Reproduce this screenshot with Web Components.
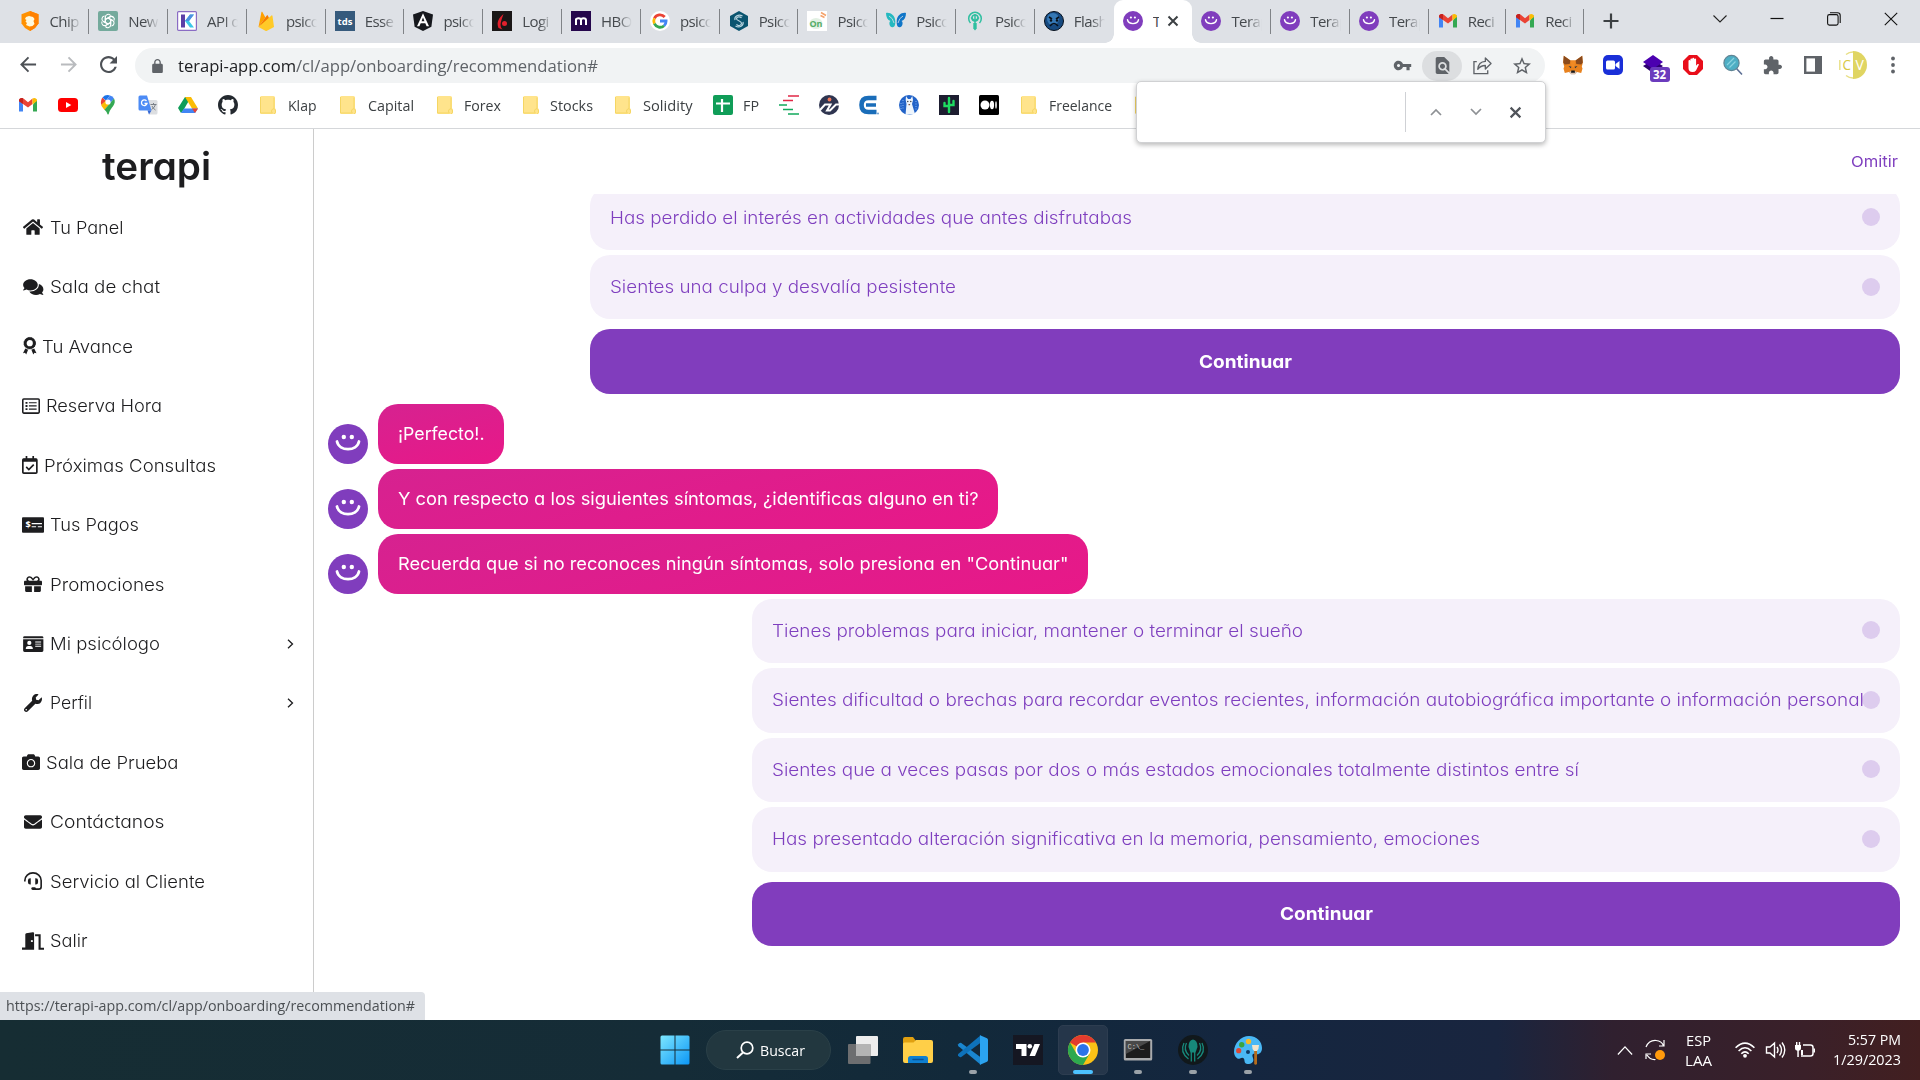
<!DOCTYPE html>
<html lang="es">
<head>
<meta charset="utf-8">
<title>Terapi</title>
<style>
html,body{margin:0;height:100%;overflow:hidden;background:#fff}
body{font-family:"Open Sans","Noto Sans",sans-serif}
</style>
</head>
<body>
<desktop-screen></desktop-screen>
<script>
const smile = '<circle cx="20" cy="20" r="20" fill="#803dbd"/><circle cx="15.800" cy="13" r="2.200" fill="#fff"/><circle cx="23.800" cy="13" r="2.200" fill="#fff"/><path d="M9 17.500c2.200 10.200 19.800 10.200 22 0" fill="none" stroke="#fff" stroke-width="2.800" stroke-linecap="round"/>';
const gmail = '<path d="M1 4v12.500h4V9.500z" fill="#4285f4"/><path d="M19 4v12.500h-4V9.500z" fill="#34a853"/><path d="M1 5.500C1 3 4 2.200 5.500 3.600L10 7.200l4.500-3.600V9L10 12.600 5 8.900 1 6z" fill="#ea4335"/><path d="M14.500 3.600C16 2.200 19 3 19 5.500V6l-4.500 3.400z" fill="#fbbc04"/><path d="M1 5.500C1 3.500 3 2.500 5 3.300v5.800L1 6.200z" fill="#c5221f"/>';
const ICONS = {
 smile:['0 0 40 40',smile], gmail:['0 0 20 20',gmail],
 brave:['0 0 20 20','<path d="M10 0l8.500 3.200v9.300L15 17l-5 3-5-3-3.500-4.500V3.200z" fill="#ff9100"/><path d="M10 0l8.500 3.200v9.300L15 17l-5 3z" fill="#ff8000"/><path d="M6 6l3-1 4 1 1.500 2-1 2 1 3-2 2-3 .5L6 14l1-2-1.500-1.500 1-1.500L5 8z" fill="#fff8dc"/>'],
 gpt:['0 0 20 20','<rect width="20" height="20" rx="2" fill="#74aa9c"/><g fill="none" stroke="#fff" stroke-width="1.100"><path id="p" d="M7.300 11.500V6.200a2.900 2.900 0 0 1 5.300-1.600M7.300 8.500l4.500-2.600a2.900 2.900 0 0 1 3.300.2"/><path d="M7.300 11.500V6.200a2.900 2.900 0 0 1 5.300-1.600M7.300 8.500l4.500-2.600" transform="rotate(60 10 10)"/><path d="M7.300 11.500V6.200a2.900 2.900 0 0 1 5.300-1.600M7.300 8.500l4.500-2.600" transform="rotate(120 10 10)"/><path d="M7.300 11.500V6.200a2.900 2.900 0 0 1 5.300-1.600M7.300 8.500l4.500-2.600" transform="rotate(180 10 10)"/><path d="M7.300 11.500V6.200a2.900 2.900 0 0 1 5.300-1.600M7.300 8.500l4.500-2.600" transform="rotate(240 10 10)"/><path d="M7.300 11.500V6.200a2.900 2.900 0 0 1 5.300-1.600M7.300 8.500l4.500-2.600" transform="rotate(300 10 10)"/></g>'],
 kibo:['0 0 20 20','<rect x=".6" y=".6" width="18.800" height="18.800" rx="1" fill="#fff" stroke="#8a6cc4" stroke-width="1.200"/><path d="M4 3.500h4v13H4z" fill="#5b3fa6"/><path d="M8 10l5-6.500h4L12 10l5 6.500h-4z" fill="#3cc8e8"/><path d="M8 10l5-6.500h4L12 10z" fill="#4f8fe0"/>'],
 firebase:['0 0 20 20','<path d="M2.500 16L5.400 1.200c.1-.6.800-.6 1-.2l3 5.400z" fill="#ffa000"/><path d="M2.500 16l8.300-11.500c.3-.5.800-.5 1 0L14 9z" fill="#f57c00"/><path d="M2.500 16L15.500 4.500c.4-.3.900-.1 1 .4L18 16l-7 3.700c-.5.300-1.100.3-1.600 0z" fill="#ffca28"/>'],
 tds:['0 0 20 20','<rect width="20" height="20" fill="#365a7c"/><text x="10" y="13.500" font-size="9.500" font-weight="700" text-anchor="middle" fill="#fff" font-family="Open Sans">tds</text>'],
 angular:['0 0 20 20','<path d="M10 0l10 3.400-1.600 12.400L10 20l-8.400-4.200L0 3.400z" fill="#16181d"/><path fill-rule="evenodd" d="M10 2.300l6 12.900h-2.400l-1.300-3H7.700l-1.300 3H4zm0 4.200L8.500 10.200h3z" fill="#fff"/>'],
 hand:['0 0 20 20','<rect width="20" height="20" fill="#1a1717"/><path d="M11.500 3C7 7 4 11 6.500 17l4 1.500c-4-4-1-9 1-15.500z" fill="#e3202d"/><circle cx="12.500" cy="12.500" r="2.500" fill="#e3202d"/>'],
 mhbo:['0 0 20 20','<rect width="20" height="20" fill="#25064c"/><path d="M5 14V7.500M5 9c.3-2.500 5-2.500 5 .3V14m0-4.700c0-2.800 5-2.800 5 0V14" fill="none" stroke="#fff" stroke-width="2"/>'],
 google:['0 0 20 20','<circle cx="10" cy="10" r="10" fill="#fff"/><g fill="none" stroke-width="2.800"><path d="M14.700 6A6.200 6.200 0 0 0 4.400 7.300" stroke="#ea4335"/><path d="M4.400 7.300a6.200 6.200 0 0 0 0 5.400" stroke="#fbbc05"/><path d="M4.400 12.700a6.200 6.200 0 0 0 9.700 2" stroke="#34a853"/><path d="M14.100 14.700a6.200 6.200 0 0 0 2-4.700H10" stroke="#4285f4"/></g>'],
 hex:['0 0 20 20','<path d="M10 0l9 5v10l-9 5-9-5V5z" fill="#0b5570"/><g fill="none" stroke="#b9d5e0" stroke-width="1.200"><path d="M12.500 7c-1.500-2-5-1.200-5 .8s5 2 5 4.500-3.500 3-5 1"/><path d="M13.500 5C9.500 2.500 5 5.500 6 9M6.500 15c4 2.500 8.500-.5 7.500-4"/></g>'],
 on:['0 0 20 20','<rect width="20" height="20" fill="#fff"/><ellipse cx="9" cy="12.500" rx="6.500" ry="5.500" fill="#e2f0e3"/><text x="9" y="15.500" font-size="9" font-weight="700" text-anchor="middle" fill="#54ad68" font-family="Open Sans">On</text><path d="M13.500 4.500l4 2M14 1.500l5 3" stroke="#f5a26b" stroke-width="1.500"/>'],
 butterfly:['0 0 20 20','<path d="M9.300 10C9 4 4 1 0 2c0 4 1.500 7 4.500 8-2 1-1 5.500 1 6 3 1 4-2 3.800-6z" fill="#25b9c0"/><path d="M10.700 10C11 4 16 1 20 2c0 4-1.500 7-4.500 8 2 1 1 5.500-1 6-3 1-4-2-3.800-6z" fill="#1076c8"/><path d="M3 5q4 2 5 7M17 5q-4 2-5 7" stroke="#dee1e6" fill="none" stroke-width=".8"/>'],
 tree:['0 0 20 20','<g fill="none" stroke="#2fbfa0" stroke-width="1.500"><path d="M5.500 12a6.300 6.300 0 1 1 9 0"/><path d="M10 3v9M10 10L6 6.500M10 10l4-3.500"/><circle cx="10" cy="7" r="3"/></g><path d="M8.300 12h3.400v5.500L10 19.500 8.300 17.500z" fill="#2fbfa0"/>'],
 flash:['0 0 20 20','<circle cx="10" cy="10" r="9.500" fill="#174a80" stroke="#07101c"/><circle cx="9" cy="8" r="6" fill="#3578b5"/><path d="M5 6l3 2M15 6l-3 2M6 15q4-5 8 0" stroke="#07101c" stroke-width="1.600" fill="none"/><circle cx="7" cy="9.500" r="1.200" fill="#07101c"/><circle cx="13" cy="9.500" r="1.200" fill="#07101c"/>'],
 close:['0 0 12 12','<path d="M1.500 1.500l9 9M10.500 1.500l-9 9" stroke="currentColor" stroke-width="2"/>'],
 plus:['0 0 16 16','<path d="M8 .5v15M.5 8h15" stroke="#3c4043" stroke-width="2.200"/>'],
 wchev:['0 0 14 10','<path d="M.5 1.500L7 8l6.500-6.500" fill="none" stroke="#222" stroke-width="1.100"/>'],
 wmin:['0 0 14 14','<path d="M.5 6.500h13" stroke="#111" stroke-width="1.200"/>'],
 wrest:['0 0 14 14','<rect x=".6" y="2.600" width="10.500" height="10.500" rx="1.800" fill="none" stroke="#111" stroke-width="1.100"/><path d="M3 .8h7.500a2.700 2.700 0 0 1 2.700 2.700V11" fill="none" stroke="#111" stroke-width="1.100"/>'],
 wclose:['0 0 14 14','<path d="M.8.8l12.400 12.400M13.200.8L.8 13.200" stroke="#111" stroke-width="1.100"/>'],
 back:['0 0 18 18','<path d="M17 9H2M9 1.500L1.500 9 9 16.500" fill="none" stroke="currentColor" stroke-width="2"/>'],
 fwd:['0 0 18 18','<path d="M1 9h15M9 1.500L16.500 9 9 16.500" fill="none" stroke="currentColor" stroke-width="2"/>'],
 reload:['4 4 16 16','<path fill="currentColor" d="M17.650 6.350C16.200 4.900 14.210 4 12 4c-4.420 0-7.990 3.580-7.990 8s3.570 8 7.990 8c3.730 0 6.840-2.550 7.730-6h-2.080c-.82 2.330-3.040 4-5.650 4-3.310 0-6-2.690-6-6s2.690-6 6-6c1.660 0 3.140.69 4.220 1.780L13 11h7V4l-2.350 2.350z"/>'],
 lock:['4 1 16 21','<path fill="#5f6368" d="M18 8h-1V6c0-2.760-2.240-5-5-5S7 3.240 7 6v2H6c-1.100 0-2 .9-2 2v10c0 1.100.9 2 2 2h12c1.100 0 2-.9 2-2V10c0-1.100-.9-2-2-2zm-9 0V6c0-1.660 1.340-3 3-3s3 1.340 3 3v2H9z"/>'],
 key:['0 0 24 24','<path fill="#5f6368" d="M12.650 10C11.830 7.670 9.610 6 7 6c-3.310 0-6 2.690-6 6s2.690 6 6 6c2.610 0 4.830-1.670 5.650-4H17v4h4v-4h2v-4H12.650zM7 14c-1.100 0-2-.9-2-2s.9-2 2-2 2 .9 2 2-.9 2-2 2z"/>'],
 find:['2 2 20 20','<path fill="#5f6368" d="M20 19.590V8l-6-6H6c-1.100 0-1.990.9-1.990 2L4 20c0 1.100.89 2 1.990 2H18c.45 0 .85-.15 1.190-.4l-4.430-4.430c-.8.52-1.740.83-2.760.83-2.760 0-5-2.240-5-5s2.240-5 5-5 5 2.240 5 5c0 1.020-.31 1.960-.83 2.750L20 19.590zM9 13c0 1.660 1.340 3 3 3s3-1.340 3-3-1.340-3-3-3-3 1.340-3 3z"/>'],
 share:['0 0 20 20','<path d="M4 6H1v12.500h14.500V15" fill="none" stroke="#5f6368" stroke-width="1.400"/><path d="M5 14c.5-5.500 3-8 8-8.300V2l6 5.800-6 5.800V10c-3.500 0-6 1.200-8 4z" fill="none" stroke="#5f6368" stroke-width="1.400" stroke-linejoin="round"/>'],
 star:['2 2 20 20','<path fill="#5f6368" d="M22 9.240l-7.190-.62L12 2 9.190 8.630 2 9.240l5.460 4.730L5.820 21 12 17.270 18.180 21l-1.630-7.030L22 9.240zM12 15.400l-3.760 2.270 1-4.280-3.320-2.880 4.380-.38L12 6.100l1.710 4.040 4.380.38-3.320 2.880 1 4.280L12 15.400z"/>'],
 fox:['0 0 20 20','<path d="M.8.8L7.500 5.500h5L19.200.8l.6 7-1 4 .7 1.800-1.300 4.400-4.200-1-2 1.800H8L6 17l-4.200 1-1.300-4.400.7-1.800-1-4z" fill="#e8821e"/><path d="M.8.8l6.700 4.700-.8 3.500-5 .5-1.500-2zM19.200.8l-6.700 4.700.8 3.500 5 .5 1.500-2z" fill="#8a4a1c"/><path d="M7.500 5.500h5L11.500 12h-3z" fill="#f08a24"/><path d="M5.500 11l3 .8-.8 1.500zM14.500 11l-3 .8.800 1.500z" fill="#233447"/><path d="M6 17l2.500-1h3l2.500 1-2 2.500H8z" fill="#d7c1b3"/><path d="M8.300 15.500h3.400l.3 2.200H8z" fill="#161616"/>'],
 zoomx:['0 0 20 20','<rect width="20" height="20" rx="5" fill="#1a2fd8"/><rect x="3" y="5.500" width="9" height="9" rx="1.500" fill="#fff"/><path d="M12.500 9l4-3v8l-4-3z" fill="#fff"/>'],
 layers:['0 0 20 20','<path d="M0 11l10-6 10 6-10 7z" fill="#2d0070"/><path d="M10 0l10 7-10 7L0 7z" fill="#4b00b0"/>'],
 abp:['0 0 20 20','<path d="M6 0h8l6 6v8l-6 6H6l-6-6V6z" fill="#e90e1a"/><path d="M5.500 10V6a.9.9 0 0 1 1.900 0v3V4.500a.9.9 0 0 1 1.900 0V8.500V3.700a.9.9 0 0 1 1.900 0V8.500V4.500a.9.9 0 0 1 1.900 0v6.300l1.300-1.500c.8-.8 1.800 0 1.300.8L13 15.500Q11.800 17 9.500 17 5.500 17 5.500 13z" fill="#fff"/>'],
 lens:['0 0 20 20','<path d="M13 13l6 6.500" stroke="#5d6f94" stroke-width="1.600"/><circle cx="8.500" cy="8" r="7.600" fill="#4eaec4" stroke="#5f8595" stroke-width="1.200"/><path d="M4 10l7-7M6.500 12.500l6-6" stroke="#8ad3e0" stroke-width="1.200"/>'],
 ext:['1 1 22 22','<path fill="#5f6368" d="M20.500 11H19V7c0-1.100-.9-2-2-2h-4V3.500C13 2.120 11.880 1 10.500 1S8 2.120 8 3.500V5H4c-1.100 0-1.990.9-1.990 2v3.800H3.500c1.490 0 2.700 1.210 2.700 2.700s-1.210 2.700-2.700 2.700H2V20c0 1.100.9 2 2 2h3.800v-1.500c0-1.490 1.210-2.700 2.700-2.700 1.490 0 2.700 1.210 2.700 2.700V22H17c1.100 0 2-.9 2-2v-4h1.500c1.380 0 2.500-1.120 2.500-2.500S21.880 11 20.500 11z"/>'],
 panel:['0 0 18 18','<rect x="1.200" y="1.200" width="15.600" height="15.600" fill="#fff" stroke="#5f6368" stroke-width="2.400"/><rect x="11" y="1" width="6" height="16" fill="#5f6368"/>'],
 cv:['0 0 28 28','<path d="M14 0a14 14 0 0 1 0 28z" fill="#e0d562"/><path d="M14 1Q10 1 7 3.500M14 27q-4 0-7-2.500M.8 9v10" fill="none" stroke="#e8df85" stroke-width="1.400"/><text x="3.500" y="19" font-size="14" textLength="8.500" lengthAdjust="spacingAndGlyphs" fill="#d8c840" font-family="Open Sans">C</text><text x="16.500" y="19" font-size="14" fill="#fff" font-family="Open Sans">V</text>'],
 dots:['0 0 4 18','<circle cx="2" cy="2.500" r="1.900" fill="#5f6368"/><circle cx="2" cy="9" r="1.900" fill="#5f6368"/><circle cx="2" cy="15.500" r="1.900" fill="#5f6368"/>'],
 youtube:['0 0 20 20','<rect y="3" width="20" height="14" rx="3.500" fill="#f00"/><path d="M8 7l5.300 3L8 13z" fill="#fff"/>'],
 maps:['0 0 20 20','<path d="M4.500 2.500L8 6 3.200 10C2.500 7 3 4.500 4.500 2.500z" fill="#ea4335"/><path d="M4.500 2.500A7 7 0 0 1 12 .5L8 5.500z" fill="#1a73e8"/><path d="M12 .5a7 7 0 0 1 4 3L12 8.500 8 5.500z" fill="#4285f4"/><path d="M3.200 10L8 5.500l4 3-5.500 6.500C5 13 3.700 11.500 3.200 10z" fill="#fbbc04"/><path d="M16 3.500c3 6-3.500 9-5 14.500-.5 2-1.500 2-2 0-.3-1.300-1-2-2.500-3.300z" fill="#34a853"/><circle cx="10" cy="7" r="2.600" fill="#fff"/>'],
 translate:['0 0 20 20','<path d="M7 5h11a1.500 1.500 0 0 1 1.500 1.500V18a1.500 1.500 0 0 1-1.500 1.500h-7z" fill="#dcdee1"/><path d="M2 .5h7l4.500 15H2A1.500 1.500 0 0 1 .5 14V2A1.500 1.500 0 0 1 2 .5z" fill="#4c8bf5"/><path d="M8.500 6A2.800 2.800 0 1 0 9 8.500H6.500" fill="none" stroke="#fff" stroke-width="1.300"/><path d="M12.500 9.500h6M15.500 8v1.500M17.500 9.500q-1 3.500-4 5M14 11q1 2.500 3.500 4" fill="none" stroke="#7a8087"/><path d="M9.500 15.500h4l-2.500 4z" fill="#3367d6"/>'],
 drive:['0 0 20 20','<path d="M7 2h6l-7.500 13L3 18 0 13z" fill="#0f9d58"/><path d="M7 2h6l7 11.500h-6z" fill="#fbbc04"/><path d="M6 13.500h14L17 18H3z" fill="#4285f4"/><path d="M14 13.500h6L17 18z" fill="#ea4335"/>'],
 github:['0 0 16 16','<path fill="#24292f" d="M8 0C3.580 0 0 3.580 0 8c0 3.540 2.290 6.530 5.470 7.590.4.07.55-.17.55-.38 0-.19-.01-.82-.01-1.490-2.010.37-2.530-.49-2.690-.94-.09-.23-.48-.94-.82-1.130-.28-.15-.68-.52-.01-.53.63-.01 1.080.58 1.230.82.72 1.210 1.870.87 2.330.66.07-.52.28-.87.51-1.070-1.780-.2-3.640-.89-3.640-3.950 0-.87.31-1.590.82-2.150-.08-.2-.36-1.020.08-2.120 0 0 .67-.21 2.200.82.64-.18 1.320-.27 2-.27s1.360.09 2 .27c1.530-1.040 2.200-.82 2.200-.82.44 1.100.16 1.920.08 2.120.51.56.82 1.270.82 2.150 0 3.070-1.870 3.750-3.650 3.950.29.25.54.73.54 1.480 0 1.070-.01 1.930-.01 2.200 0 .21.15.46.55.38A8.010 8.010 0 0 0 16 8c0-4.420-3.580-8-8-8z"/>'],
 folder:['0 0 16 20','<path d="M1.500 1h12A1.500 1.500 0 0 1 15 2.500V13l1 2v2.500q0 1.500-1.500 1.500h-13A1.500 1.500 0 0 1 0 17.500v-15A1.500 1.500 0 0 1 1.500 1z" fill="#ffe48c"/><path d="M.5 2v16h12q-1-.5-1-2 0-2 2.500-2.300V2.500M14 13.500q2 1 1.500 4l-1.500 1.300" fill="none" stroke="#f5d663"/>'],
 sheet:['0 0 20 20','<rect width="20" height="20" rx="2" fill="#109d58"/><path d="M9 4v13M3 8.500h14" stroke="#fff" stroke-width="2.200"/>'],
 redgreen:['0 0 20 20','<g stroke-width="1.500"><path d="M9 1h11M4 5.500h10" stroke="#e12745"/><path d="M0 10h8M4 14.500h10M9 19h11" stroke="#12a95c"/></g>'],
 info:['0 0 20 20','<circle cx="10" cy="10" r="10" fill="#2f3550"/><path d="M1 15l5-5.500h5.500L8 15.500h3l6-6H20" stroke="#fff" stroke-width="2" fill="none"/><circle cx="10.500" cy="4.500" r="1.900" fill="#f0795b"/>'],
 bige:['0 0 20 20','<path d="M17.500 3H9.500C4.500 3 2.500 6 2.500 10s2 7 7 7h8" fill="none" stroke="#1a6db9" stroke-width="4.600"/><path d="M7 10h10" stroke="#1a6db9" stroke-width="3.500"/><circle cx="19" cy="18.500" r="1" fill="#6d9fd0"/>'],
 llama:['0 0 20 20','<circle cx="10" cy="10" r="10" fill="#2263c8"/><path d="M2 8v7M4 5v10M17 6v9" stroke="#85b5f2" stroke-dasharray="1 1.500"/><path d="M6.500 20L7.500 9l-.8-4 .3-4L9 4h2.500l1.800-3L14 5l-1 4 3 10z" fill="#eef5fc"/><circle cx="8.800" cy="6.500" r=".7" fill="#333"/><circle cx="11.800" cy="6.500" r=".7" fill="#333"/><path d="M9.500 9h1.600v1.200H9.500z" fill="#7a5548"/>'],
 cactus:['0 0 20 20','<rect width="20" height="20" fill="#1d1d30"/><path d="M10 3v14M5.500 8v3h4M14.500 6v4H10" stroke="#1edb61" stroke-width="2.400" fill="none" stroke-linecap="round"/>'],
 medium:['0 0 20 20','<rect width="20" height="20" rx="1.500" fill="#000"/><circle cx="6" cy="10" r="4.500" fill="#fff"/><ellipse cx="13" cy="10" rx="2.100" ry="4.200" fill="#fff"/><ellipse cx="17" cy="10" rx=".8" ry="3.800" fill="#fff"/>'],
 up:['0 0 12 8','<path d="M1 7l5-5 5 5" fill="none" stroke="#8d9094" stroke-width="1.700"/>'],
 down:['0 0 12 8','<path d="M1 1l5 5 5-5" fill="none" stroke="#8d9094" stroke-width="1.700"/>'],
 home:['0 0 576 512','<path d="M280.370 148.260L96 300.110V464a16 16 0 0 0 16 16l112.060-.29a16 16 0 0 0 15.920-16V368a16 16 0 0 1 16-16h64a16 16 0 0 1 16 16v95.640a16 16 0 0 0 16 16.050L464 480a16 16 0 0 0 16-16V300L295.670 148.260a12.190 12.190 0 0 0-15.300 0zM571.600 251.470L488 182.560V44.050a12 12 0 0 0-12-12h-56a12 12 0 0 0-12 12v72.610L318.470 43a48 48 0 0 0-61 0L4.340 251.470a12 12 0 0 0-1.600 16.900l25.500 31A12 12 0 0 0 45.150 301l235.220-193.740a12.190 12.190 0 0 1 15.300 0L530.900 301a12 12 0 0 0 16.900-1.600l25.500-31a12 12 0 0 0-1.700-16.930z"/>'],
 comments:['0 0 576 512','<path d="M416 192c0-88.400-93.100-160-208-160S0 103.600 0 192c0 34.300 14.100 65.900 38 92-13.400 30.200-35.500 54.200-35.800 54.500-2.200 2.300-2.800 5.700-1.500 8.700S4.800 352 8 352c36.600 0 66.900-12.300 88.700-25 32.200 15.700 70.300 25 111.300 25 114.900 0 208-71.600 208-160zm122 220c23.900-26 38-57.700 38-92 0-66.900-53.500-124.200-129.300-148.100.9 6.600 1.300 13.300 1.300 20.100 0 105.900-107.700 192-240 192-10.800 0-21.300-.8-31.700-1.900C207.800 439.600 281.800 480 368 480c41 0 79.100-9.200 111.300-25 21.800 12.700 52.100 25 88.700 25 3.200 0 6.100-1.900 7.300-4.800 1.300-2.900.7-6.300-1.500-8.700-.3-.3-22.400-24.200-35.800-54.500z"/>'],
 award:['0 0 384 512','<circle cx="192" cy="176" r="128" fill="none" stroke="currentColor" stroke-width="80" /><circle cx="192" cy="176" r="164" fill="none" stroke="currentColor" stroke-width="24" stroke-dasharray="60 26"/><path d="M65 330l80 35-54 135-34-52-57 12zM319 330l-80 35 54 135 34-52 57 12z"/>'],
 list:['0 0 512 512','<rect x="22" y="54" width="468" height="404" rx="28" fill="none" stroke="currentColor" stroke-width="44"/><path d="M100 140h56v50h-56zM100 231h56v50h-56zM100 322h56v50h-56zM196 147h220v34H196zM196 238h220v34H196zM196 329h220v34H196z"/>'],
 calendar:['0 0 448 512','<rect x="24" y="88" width="400" height="400" rx="28" fill="none" stroke="currentColor" stroke-width="48"/><path d="M24 80h400v80H24zM104 0h48v100h-48zM296 0h48v100h-48z"/><path d="M120 310l75 75 140-140" fill="none" stroke="currentColor" stroke-width="46"/>'],
 pay:['0 0 640 512','<rect y="32" width="640" height="448" rx="28"/><path d="M280 200h300v34H280zM280 290h130v30H280zM460 290h120v30H460z" fill="#fff"/><text x="100" y="355" font-size="270" font-weight="700" fill="#fff" font-family="Open Sans">$</text>'],
 gift:['0 0 512 512','<path d="M32 448c0 17.700 14.300 32 32 32h160V320H32v128zm256 32h160c17.700 0 32-14.300 32-32V320H288v160zM480 160h-42.100c6.200-12.100 10.100-25.500 10.100-40 0-48.500-39.500-88-88-88-41.600 0-68.500 21.300-103 68.300-34.500-47-61.400-68.300-103-68.300-48.500 0-88 39.500-88 88 0 14.500 3.800 27.900 10.100 40H32c-17.700 0-32 14.300-32 32v80c0 8.800 7.200 16 16 16h480c8.800 0 16-7.200 16-16v-80c0-17.700-14.300-32-32-32zm-326.100 0c-22.100 0-40-17.900-40-40s17.900-40 40-40c19.900 0 34.600 3.300 86.100 60l17 20H153.900zm206.100 0H257l17-20c51.400-56.700 66-60 86-60 22.100 0 40 17.900 40 40s-17.900 40-40 40z"/>'],
 idcard:['0 0 576 512','<path d="M0 72q0-40 40-40h496q40 0 40 40v20H0zM0 124h576v316q0 40-40 40H40q-40 0-40-40z"/><circle cx="176" cy="224" r="60" fill="#fff"/><path d="M75 400q0-90 75-90h52q75 0 75 90zM344 184h168v26H344zM344 246h168v26H344zM344 308h168v26H344z" fill="#fff"/>'],
 wrench:['0 0 512 512','<path d="M507.730 109.100c-2.240-9.030-13.540-12.090-20.120-5.510l-74.360 74.360-67.880-11.310-11.310-67.880 74.360-74.360c6.620-6.620 3.430-17.900-5.660-20.160-47.380-11.740-99.550.91-136.580 37.930-39.640 39.640-50.550 97.100-34.050 147.200L18.740 402.760c-24.990 24.990-24.990 65.510 0 90.500 24.990 24.990 65.510 24.990 90.500 0l213.210-213.210c50.120 16.710 107.470 5.680 147.370-34.220 37.070-37.070 49.700-89.320 37.910-136.730zM64 472c-13.250 0-24-10.750-24-24 0-13.260 10.750-24 24-24s24 10.740 24 24c0 13.250-10.750 24-24 24z"/>'],
 camera:['0 0 512 512','<path d="M512 144v288c0 26.500-21.500 48-48 48H48c-26.500 0-48-21.500-48-48V144c0-26.500 21.500-48 48-48h88l12.300-32.900c7-18.700 24.900-31.100 44.900-31.100h125.500c20 0 37.900 12.400 44.900 31.100L376 96h88c26.500 0 48 21.500 48 48zM376 288c0-66.200-53.800-120-120-120s-120 53.800-120 120 53.800 120 120 120 120-53.800 120-120zm-32 0c0 48.500-39.500 88-88 88s-88-39.500-88-88 39.500-88 88-88 88 39.500 88 88z"/>'],
 envelope:['0 0 512 512','<path d="M502.300 190.800c3.900-3.100 9.700-.2 9.700 4.700V400c0 26.500-21.500 48-48 48H48c-26.500 0-48-21.500-48-48V195.600c0-5 5.700-7.800 9.700-4.700 22.400 17.400 52.100 39.500 154.100 113.600 21.100 15.400 56.700 47.800 92.200 47.600 35.700.3 72-32.800 92.300-47.600 102-74.100 131.600-96.300 154-113.700zM256 320c23.200.4 56.600-29.200 73.400-41.400 132.700-96.300 142.800-104.700 173.400-128.700 5.800-4.500 9.200-11.500 9.200-18.900v-19c0-26.500-21.500-48-48-48H48c-26.500 0-48 21.500-48 48v19c0 7.400 3.400 14.300 9.200 18.900 30.600 23.900 40.700 32.400 173.400 128.700 16.800 12.200 50.200 41.800 73.400 41.400z"/>'],
 headset:['0 0 512 512','<path d="M24 270V240a232 216 0 0 1 464 0v180q0 68-68 68H300" fill="none" stroke="currentColor" stroke-width="46"/><path d="M192 176h-16q-64 0-64 64v48q0 64 64 64h16zM320 176h16q64 0 64 64v48q0 64-64 64h-16z"/><rect x="208" y="432" width="130" height="78" rx="38"/>'],
 door:['0 0 640 512','<path fill-rule="evenodd" d="M0 448h96V70q0-28 28-36L310 1q42-8 42 32v479H0zM288 224a32 32 0 1 0 .1 0z"/><path d="M380 88h132v392h128" fill="none" stroke="currentColor" stroke-width="62"/>'],
 chev:['0 0 7 10','<path d="M1 .7L5.500 5 1 9.300" fill="none" stroke="currentColor" stroke-width="1.300"/>'],
 win:['0 0 30 30','<defs><linearGradient id="g" gradientUnits="userSpaceOnUse" x1="0" y1="0" x2="30" y2="30"><stop offset="0" stop-color="#7fe8ff"/><stop offset="1" stop-color="#0a95f5"/></linearGradient></defs><path fill="url(#g)" d="M2 .5h12.500v14H.500V2Q.5.500 2 .5zM15.500.5H28q1.500 0 1.500 1.500v12.500h-14zM.5 15.500h14v14H2q-1.500 0-1.500-1.500zM15.500 15.500h14V28q0 1.500-1.500 1.500H15.500z"/>'],
 search:['0 0 18 18','<circle cx="11" cy="7" r="5.800" fill="none" stroke="#fff" stroke-width="1.700"/><path d="M7 11.500L1 17" stroke="#fff" stroke-width="2"/>'],
 taskview:['0 0 30 30','<rect x="8" y="1" width="22" height="20" rx="1" fill="#ededed"/><rect y="9" width="22.500" height="20" rx="1" fill="#6d6e70"/><path d="M8 9h14.500v12H8z" fill="#b4b4b4"/>'],
 explorer:['0 0 30 30','<path d="M0 4q0-2 2-2h8l3 4h15v8H0z" fill="#e0a010"/><path d="M0 9q0-1.500 1.500-1.500h9L13 5h15q2 0 2 2v19q0 2-2 2H2q-2 0-2-2z" fill="#ffcf48"/><path d="M5 28v-4.500q0-2.500 2.500-2.500h15q2.500 0 2.500 2.500V28z" fill="#0f7fd0"/><path d="M10 24.500h10" stroke="#0a4f93" stroke-width="1.500" stroke-linecap="round"/>'],
 vscode:['0 0 30 30','<path d="M0 9.500Q1.500 7.300 3.300 8L23 22.500V30L.5 11.300Q-.3 10.500 0 9.500z" fill="#1a86cf"/><path d="M0 20.500q1.500 2.200 3.300 1.500L23 7.500V0L.5 18.700q-.8.800-.5 1.800z" fill="#0e72ba"/><path d="M21.500 0l7.500 3.300q1 .5 1 1.700v20q0 1.200-1 1.700L21.500 30q1.500-1 1.500-3V3q0-2-1.500-3z" fill="#2ba3f0"/><path d="M22 1h1.500v28H22z" fill="#2ba3f0"/>'],
 tv:['0 0 30 30','<rect width="30" height="30" fill="#151722"/><path d="M3 9h10.500v12H8.500v-7H3z" fill="#fff"/><circle cx="16.800" cy="11.300" r="2.300" fill="#fff"/><path d="M21.500 9H27l-5 12h-5.500z" fill="#fff"/>'],
 chrome:['0 0 30 30','<circle cx="15" cy="15" r="15" fill="#fbc116"/><path d="M15 15L2 7.500A15 15 0 0 1 28 7.500H15z" fill="#e33b2e"/><path d="M2 7.500A15 15 0 0 0 15 30l6.500-11.300L8.500 18.700z" fill="#2da94f"/><circle cx="15" cy="15" r="7.500" fill="#fff"/><circle cx="15" cy="15" r="5.900" fill="#2b73e8"/>'],
 term:['0 0 30 30','<rect x=".8" y="4" width="28.400" height="21.500" rx="1.500" fill="#a9abad"/><rect x="2.800" y="6" width="24.400" height="17" fill="#1c1c1c"/><path d="M2.800 6h24.400L2.800 19z" fill="#494949"/><text x="4.500" y="14" font-size="7" fill="#ccc" font-family="Liberation Mono">C:\\_</text>'],
 kraken:['0 0 30 30','<circle cx="15" cy="15" r="15" fill="#11181b"/><g fill="none" stroke="#17897b" stroke-width="1.300"><path d="M6 8q-4.500 9 4.500 16M8.500 8q-3.500 7 2.500 12.500M24 8q4.500 9-4.500 16M21.500 8q3.500 7-2.500 12.500M13.300 17v9.500M16.700 17v9.500"/></g><path d="M10.500 12q0-7 4.500-7.500 4.500.500 4.500 7.500l-2 5.500h-5z" fill="#17897b"/>'],
 paint:['0 0 30 30','<path d="M1 17C1 8 8 1 16 1c8 0 13 6 13 12 0 5-3.500 7-6 6-4-1-4 1-3 4 1.500 4-1.500 6-5.500 6-1.500 0-3-1-3-3 0-3-2-4-4.500-2.500S1 21 1 17z" fill="#4ab8f5"/><circle cx="8.700" cy="9.700" r="2.700" fill="#3aa53f"/><circle cx="15.500" cy="6.500" r="2.700" fill="#f5b92a"/><circle cx="5.700" cy="15.700" r="2.600" fill="#dd4934"/><circle cx="15" cy="17" r="2" fill="#0d3a66"/><path d="M19 10h7q0 4-2 6h-3q-2-2-2-6z" fill="#f4e4cb"/><path d="M21.200 16h2.800v13q-1.400 1.500-2.800 0z" fill="#b56c1c"/>'],
 caret:['0 0 18 12','<path d="M1 10.500l8-8.500 8 8.500" fill="none" stroke="#fff" stroke-width="1.400"/>'],
 sync:['0 0 20 22','<path d="M1 8Q4 1 11 1.500q6 .5 7.500 5.500M19 1v6h-5M1 20v-5h5M2 16q3 5 8.500 4.500" fill="none" stroke="#fff" stroke-width="1.200"/><circle cx="15" cy="16" r="5" fill="#ff9a0c"/>'],
 wifi:['0 0 20 16','<g fill="none" stroke="#fff" stroke-width="1.600"><path d="M.6 5.800q9.400-9.400 18.800 0M3.600 9q6.400-6.400 12.800 0M6.300 11.800q3.700-3.700 7.400 0"/></g><circle cx="10" cy="13.800" r="1.900" fill="#fff"/>'],
 speaker:['0 0 20 18','<g fill="none" stroke="#fff" stroke-width="1.400"><path d="M1 6h3.500L9 2v14l-4.500-4H1zM11.500 6q2 3 0 6M14 3.500q4 5.500 0 11M16.500 1.500q5.500 7.500 0 15"/></g>'],
 battery:['0 0 20 18','<path d="M8 4h7.500q2.500 0 2.500 2.500v6q0 2.500-2.500 2.500H6" fill="none" stroke="#fff" stroke-width="1.500"/><path d="M18.500 7.500H20v4h-1.500zM0 4h6v3.500q0 2-2.200 2.200V16H2.300V9.700Q0 9.500 0 7.500zM1 1h1.400v3H1zM3.800 1h1.400v3H3.800z" fill="#fff"/><path d="M6 9h2v5H6z" fill="#fff"/>']
};

// define(tag, render): renders a template into an open shadow root
function define(tag, render){
  customElements.define(tag, class extends HTMLElement{
    connectedCallback(){
      if(this.shadowRoot) return;
      const t=document.createElement('template');
      t.innerHTML=render(n=>this.getAttribute(n)||'', this);
      this.attachShadow({mode:'open'}).append(t.content.cloneNode(true));
    }
  });
}
const fits=[];
// fit-text: stretches its line to exactly w pixels, mostly by glyph width
customElements.define('fit-text', class extends HTMLElement{
  connectedCallback(){
    if(this.shadowRoot) return;
    this.attachShadow({mode:'open'}).innerHTML='<style>:host{display:inline-block;white-space:pre;flex:none}span{display:inline-block;transform-origin:0 50%}</style><span><slot></slot></span>';
    fits.push(this);
  }
  fit(){
    const w=+this.getAttribute('w'); if(!w) return;
    const s=this.shadowRoot.querySelector('span');
    const k=w/s.getBoundingClientRect().width;
    this.style.width=w+'px';
    s.style.transform='scaleX('+k.toFixed(5)+')';
  }
});
define('ui-icon',(a,el)=>{const i=ICONS[a('name')];const w=a('w')||20,h=a('h')||w;
  return `<style>:host{display:block;flex:none;width:${w}px;height:${h}px}svg{display:block;width:100%;height:100%;overflow:visible;fill:currentColor}</style><svg viewBox="${i[0]}">${i[1]}</svg>`});

define('browser-tab',a=>`<style>
:host{display:flex;box-sizing:border-box;width:${a('w')||78.8}px;height:43px;padding:0 0 1px 9px;align-items:center;position:relative;color:#45494d;flex:none}
.t{margin-left:10px;width:31px;overflow:hidden;white-space:nowrap;font-size:15px;letter-spacing:-.6px;line-height:22px;-webkit-mask-image:linear-gradient(90deg,#000 55%,transparent)}
:host(:not([active]))::after{content:"";position:absolute;right:0;top:9px;width:1px;height:25px;background:${a('nosep')?'transparent':'#808387'}}
:host([active]){background:#fff;border-radius:9px 9px 0 0}
:host([active]) .t{width:6px;-webkit-mask-image:none}
:host([active])::before,:host([active])::after{content:"";position:absolute;bottom:0;width:9px;height:9px}
:host([active])::before{left:-9px;background:radial-gradient(circle at 0 0,transparent 8.500px,#fff 9px)}
:host([active])::after{right:-9px;background:radial-gradient(circle at 100% 0,transparent 8.500px,#fff 9px)}
.x{margin-left:8px;color:#3c4043}
</style><ui-icon name="${a('icon')}" w="20"></ui-icon><span class="t"><slot></slot></span>${a('close')?'<ui-icon class="x" name="close" w="12"></ui-icon>':''}`);

define('tab-strip',()=>{
 const tabs=[['brave','Chip'],['gpt','New'],['kibo','API d'],['firebase','psico'],['tds','Esse'],['angular','psico'],['hand','Logi'],['mhbo','HBO'],['google','psico'],['hex','Psico'],['on','Psico'],['butterfly','Psico'],['tree','Psico'],['flash','Flash']];
 return `<style>:host{display:flex;height:43px;background:#dee1e6;padding-left:10.500px;box-sizing:border-box}
 .plus{margin:13px 0 0 19px}.win{margin-left:auto;display:flex;width:229px;height:37px}.win div{flex:1;display:grid;place-items:center}</style>
 ${tabs.map((t,i)=>`<browser-tab icon="${t[0]}" ${i==13?'nosep="1"':''}>${t[1]}</browser-tab>`).join('')}
 <browser-tab active close="1" icon="smile">T</browser-tab>
 <browser-tab icon="smile">Terap</browser-tab><browser-tab icon="smile">Terap</browser-tab><browser-tab icon="smile">Terap</browser-tab>
 <browser-tab w="77.500" icon="gmail">Reci</browser-tab><browser-tab w="77.500" icon="gmail">Reci</browser-tab>
 <ui-icon class="plus" name="plus" w="16"></ui-icon>
 <div class="win"><div><ui-icon name="wchev" w="14" h="10"></ui-icon></div><div><ui-icon name="wmin" w="14"></ui-icon></div><div><ui-icon name="wrest" w="14"></ui-icon></div><div><ui-icon name="wclose" w="14"></ui-icon></div></div>`});

define('tool-bar',()=>`<style>
:host{display:flex;height:45px;align-items:center;background:#fff;box-sizing:border-box;padding-left:8px}
.c{width:40px;height:40px;display:grid;place-items:center;flex:none;position:relative}
.nav{display:flex;width:127px;color:#4d5156;margin-top:-2px}.dis{color:#b9bbbe}
.omni{width:1410px;height:35px;border-radius:18px;background:#f1f3f4;display:flex;align-items:center;box-sizing:border-box;padding-left:17px;flex:none}
.url{margin-left:15px;font-size:17px;color:#5f6368;display:flex;line-height:24px}.url b{font-weight:400;color:#202124}
.r{margin-left:auto;display:flex;padding-right:3px}
.pill{width:40px;height:30px;border-radius:18px;background:#dcdee0;display:grid;place-items:center}
.ext{display:flex;margin-left:7.500px;margin-top:-1px}
.badge{position:absolute;left:17px;top:22px;width:20px;height:15px;border-radius:3px;background:#6b3bbd;color:#fff;font:700 11.500px/15px "Open Sans";text-align:center}
</style>
<div class="nav"><div class="c"><ui-icon name="back" w="17"></ui-icon></div><div class="c dis"><ui-icon name="fwd" w="17"></ui-icon></div><div class="c"><ui-icon name="reload" w="17"></ui-icon></div></div>
<div class="omni"><ui-icon name="lock" w="11" h="14"></ui-icon><div class="url"><fit-text w="118"><b>terapi-app.com</b></fit-text><fit-text w="302">/cl/app/onboarding/recommendation#</fit-text></div>
<div class="r"><div class="c"><ui-icon name="key" w="19"></ui-icon></div><div class="c"><div class="pill"><ui-icon name="find" w="17"></ui-icon></div></div><div class="c"><ui-icon name="share" w="19"></ui-icon></div><div class="c"><ui-icon name="star" w="18"></ui-icon></div></div></div>
<div class="ext">${['fox','zoomx','layers','abp','lens'].map(n=>`<div class="c"><ui-icon name="${n}" w="20"></ui-icon>${n=='layers'?'<span class="badge">32</span>':''}</div>`).join('')}
<div class="c"><ui-icon name="ext" w="19"></ui-icon></div><div class="c"><ui-icon name="panel" w="18"></ui-icon></div><div class="c"><ui-icon name="cv" w="28"></ui-icon></div><div class="c"><ui-icon name="dots" w="4" h="18"></ui-icon></div></div>`);

define('book-mark',a=>`<style>:host{display:flex;box-sizing:border-box;width:${a('w')||40}px;padding-left:${a('icon')=='folder'?12:10}px;align-items:center;flex:none;font-size:14.500px;color:#3c4043;line-height:22px}
fit-text{margin-left:${a('icon')=='folder'?11.5:9.5}px;padding-top:1px}</style><ui-icon name="${a('icon')}" w="${a('icon')=='folder'?16:20}" h="20"></ui-icon>${a('t')?`<fit-text w="${a('t')}"><slot></slot></fit-text>`:''}`);
define('bookmark-bar',()=>{
 const b=[['gmail'],['youtube'],['maps'],['translate'],['drive'],['github'],['folder',80,28.500,'Klap'],['folder',96.500,46,'Capital'],['folder',86,37,'Forex'],['folder',92.500,43,'Stocks'],['folder',100,49.500,'Solidity'],['sheet',66,16,'FP'],['redgreen'],['info'],['bige'],['llama'],['cactus'],['medium'],['folder',114,63,'Freelance'],['folder',60]];
 return `<style>:host{display:flex;height:41px;padding:0 0 6px 8px;box-sizing:border-box;border-bottom:1px solid #d5d7da;background:#fff}</style>`+b.map(x=>`<book-mark icon="${x[0]}" w="${x[1]||40}" t="${x[2]||''}">${x[3]||''}</book-mark>`).join('')});

define('find-bar',()=>`<style>:host{display:flex;position:absolute;left:1136px;top:81px;width:410px;height:62px;box-sizing:border-box;background:#fff;border:1px solid #d0d1d3;border-radius:5px;box-shadow:0 2px 5px rgba(0,0,0,.28);align-items:center;z-index:3}
.l{width:1.500px;height:40px;background:#cfd1d5;margin-left:267.500px;margin-right:9.500px}.c{width:40px;display:grid;place-items:center;color:#50545a}</style><div class="l"></div><div class="c"><ui-icon name="up" w="12" h="8"></ui-icon></div><div class="c"><ui-icon name="down" w="12" h="8"></ui-icon></div><div class="c"><ui-icon name="close" w="13"></ui-icon></div>`);

define('nav-item',a=>`<style>:host{display:flex;height:59.480px;align-items:center;color:#1d1d1f;font-size:17.500px;font-weight:300;padding-right:19px}
.i{width:${a('iw')-4.5}px;margin-right:5px;display:grid;place-items:center;flex:none}ui-icon.c{margin-left:auto}</style><span class="i"><ui-icon name="${a('icon')}" w="${a('w')}" h="18"></ui-icon></span><fit-text w="${a('t')}"><slot></slot></fit-text>${a('more')?'<ui-icon class="c" name="chev" w="7" h="10"></ui-icon>':''}`);
define('side-bar',()=>{
 const n=[['home',27,20,73.500,'Tu Panel'],['comments',27,20.500,110,'Sala de chat'],['award',19,13.500,91,'Tu Avance'],['list',23,18,116,'Reserva Hora'],['calendar',21,15.700,172,'Próximas Consultas'],['pay',27,22,89,'Tus Pagos'],['gift',27,18,114.500,'Promociones'],['idcard',27,20.500,110,'Mi psicólogo',1],['wrench',27,18,42,'Perfil',1],['camera',23,18,132.500,'Sala de Prueba'],['envelope',27,18,114.500,'Contáctanos'],['headset',27,18,155,'Servicio al Cliente'],['door',27,22,37.500,'Salir']];
 return `<style>:host{display:block;width:313px;border-right:1px solid #ccc;flex:none}
 .logo{height:68.500px;display:flex;justify-content:center;align-items:flex-start;font-size:38.500px;font-weight:600;line-height:75px;color:#1d1d1f}
 nav{padding-left:22px}</style><div class="logo"><fit-text w="109">terapi</fit-text></div><nav>${n.map(x=>`<nav-item icon="${x[0]}" iw="${x[1]}" w="${x[2]}" t="${x[3]}" ${x[5]?'more="1"':''}>${x[4]}</nav-item>`).join('')}</nav>`});

define('chat-option',a=>`<style>:host{display:flex;box-sizing:border-box;height:64.450px;border-radius:20px;background:#f5f0fa;color:#7f3fbf;align-items:center;padding:0 20px 1.500px 19.500px;font-size:17.500px;font-weight:350;flex:none;margin-bottom:5px}
i{width:18px;height:18px;border-radius:50%;background:#ddccee;margin-left:auto;flex:none}fit-text{margin-right:-30px}</style><fit-text w="${a('t')}"><slot></slot></fit-text><i></i>`);
define('chat-button',()=>`<style>:host{display:flex;box-sizing:border-box;height:64.500px;border-radius:20px;background:#813dbd;color:#fff;align-items:center;justify-content:center;font-size:17.500px;font-weight:650;margin-top:5px;padding-bottom:1px;flex:none}</style><fit-text w="93"><slot></slot></fit-text>`);
define('chat-bubble',a=>`<style>:host{display:flex;align-items:flex-end;gap:10px;margin-bottom:5px;flex:none}
div{height:60px;border-radius:20px;padding:0 20px 0 19.500px;background:linear-gradient(165deg,#d62290,#e81888);color:#fff;display:flex;align-items:center;font-size:17.500px;font-weight:400}</style><ui-icon name="smile" w="40"></ui-icon><div><fit-text w="${a('t')}"><slot></slot></fit-text></div>`);
define('chat-view',()=>`<style>:host{display:flex;flex-direction:column;flex:1;min-width:0}
header{height:65px;flex:none;display:flex;justify-content:flex-end;box-sizing:border-box;padding:20px 22px 0 0;font-size:15px;line-height:26px;color:#7f3fbf;font-weight:400}
main{flex:1;min-height:0;overflow:hidden;padding:0 20px 0 14px;display:flex;flex-direction:column}
section{display:flex;flex-direction:column;align-self:flex-end;flex:none}.a{width:1310px;margin:-8.400px 0 10px}.b{width:1148px}</style>
<header><fit-text w="47">Omitir</fit-text></header>
<main><section class="a"><chat-option t="522">Has perdido el interés en actividades que antes disfrutabas</chat-option><chat-option t="346">Sientes una culpa y desvalía pesistente</chat-option><chat-button>Continuar</chat-button></section>
<chat-bubble t="86.500">¡Perfecto!.</chat-bubble><chat-bubble t="580.500">Y con respecto a los siguientes síntomas, ¿identificas alguno en ti?</chat-bubble><chat-bubble t="670.500">Recuerda que si no reconoces ningún síntomas, solo presiona en "Continuar"</chat-bubble>
<section class="b"><chat-option t="531">Tienes problemas para iniciar, mantener o terminar el sueño</chat-option><chat-option t="1092">Sientes dificultad o brechas para recordar eventos recientes, información autobiográfica importante o información personal</chat-option><chat-option t="807">Sientes que a veces pasas por dos o más estados emocionales totalmente distintos entre sí</chat-option><chat-option t="708">Has presentado alteración significativa en la memoria, pensamiento, emociones</chat-option><chat-button>Continuar</chat-button></section></main>`);
define('status-bubble',()=>`<style>:host{position:absolute;left:0;top:992px;width:425px;height:28px;box-sizing:border-box;background:#dee1e6;border-radius:0 4px 0 0;padding-left:5.500px;font-size:14.500px;line-height:28px;color:#4c5054}</style><fit-text w="409">https://terapi-app.com/cl/app/onboarding/recommendation#</fit-text>`);

define('task-app',a=>`<style>:host{width:55px;height:60px;display:grid;place-items:center;position:relative;flex:none}
:host([current])::before{content:"";position:absolute;left:2.500px;top:5px;width:50px;height:50px;box-sizing:border-box;border-radius:5px;background:#25364a;border:1px solid #2d3d50}
ui-icon{position:relative}
i{position:absolute;top:50px;width:8px;height:4px;border-radius:2px;background:#9ba2a8}:host([current]) i{width:20px;background:#4cc2ff}</style><ui-icon name="${a('name')}" w="30"></ui-icon>${a('run')?'<i></i>':''}`);
define('task-bar',()=>`<style>:host{display:flex;height:60px;align-items:center;background:linear-gradient(90deg,#162d33 0,#152c37 35%,#12293a 50%,#14263f 64%,#19253f 78%,#30202f 84%,#3a2029 94%,#421f20 100%);color:#fff;flex:none;font-size:15px}
.s{width:125px;height:40px;border-radius:20px;background:#22373f;border:1px solid #2a4048;box-sizing:border-box;display:flex;align-items:center;padding-left:29px;gap:6px;margin:0 4px;flex:none}
.tray{margin-left:auto;display:flex;align-items:center;height:60px;padding-right:19px}
.two{display:flex;flex-direction:column;line-height:20px;align-items:center;padding-bottom:1px}.clk{align-items:flex-end;width:86px;padding-bottom:2px}</style>
<task-app name="win" style="margin-left:647px"></task-app><div class="s"><ui-icon name="search" w="18"></ui-icon><fit-text w="45">Buscar</fit-text></div>
<task-app name="taskview"></task-app><task-app name="explorer"></task-app><task-app name="vscode" run="1"></task-app><task-app name="tv"></task-app><task-app name="chrome" run="1" current></task-app><task-app name="term" run="1"></task-app><task-app name="kraken" run="1"></task-app><task-app name="paint" run="1"></task-app>
<div class="tray"><ui-icon name="caret" w="16" h="11"></ui-icon><ui-icon name="sync" w="20" h="22" style="margin-left:12px"></ui-icon><div class="two" style="margin:0 23px 0 19px;width:28px"><fit-text w="25">ESP</fit-text><fit-text w="27">LAA</fit-text></div><ui-icon name="wifi" w="20" h="16"></ui-icon><ui-icon name="speaker" w="21" h="18" style="margin:0 9px 0 10px"></ui-icon><ui-icon name="battery" w="20" h="18"></ui-icon><div class="two clk"><fit-text w="53">5:57 PM</fit-text><fit-text w="68">1/29/2023</fit-text></div></div>`);

define('desktop-screen',()=>`<style>:host{display:flex;flex-direction:column;width:1920px;height:1080px;position:relative;overflow:hidden}
.page{display:flex;flex:1;min-height:0;background:#fff;font-family:Inter,"Open Sans",sans-serif;font-feature-settings:"cv11"}</style>
<tab-strip></tab-strip><tool-bar></tool-bar><bookmark-bar></bookmark-bar><div class="page"><side-bar></side-bar><chat-view></chat-view></div><task-bar></task-bar><find-bar></find-bar><status-bubble></status-bubble>`);
fits.forEach(f=>f.fit());
</script>
</body>
</html>
